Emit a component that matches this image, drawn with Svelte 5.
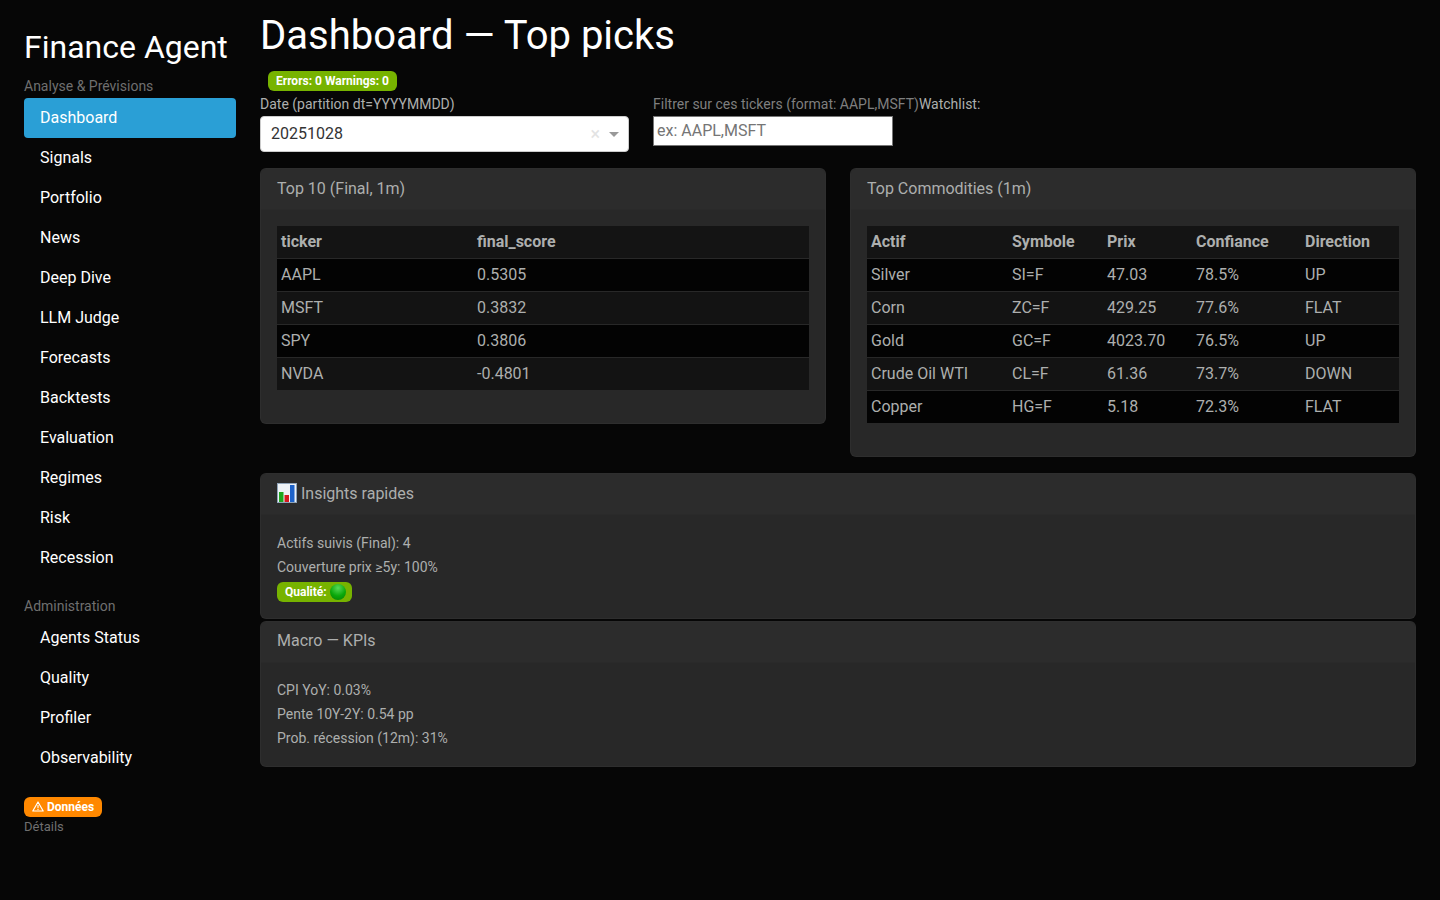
<script>
    const analyse = ['Dashboard', 'Signals', 'Portfolio', 'News', 'Deep Dive', 'LLM Judge', 'Forecasts', 'Backtests', 'Evaluation', 'Regimes', 'Risk', 'Recession'];
    const admin = ['Agents Status', 'Quality', 'Profiler', 'Observability'];

    const top10 = [
        ['AAPL', '0.5305'],
        ['MSFT', '0.3832'],
        ['SPY', '0.3806'],
        ['NVDA', '-0.4801']
    ];
    const commodities = [
        ['Silver', 'SI=F', '47.03', '78.5%', 'UP'],
        ['Corn', 'ZC=F', '429.25', '77.6%', 'FLAT'],
        ['Gold', 'GC=F', '4023.70', '76.5%', 'UP'],
        ['Crude Oil WTI', 'CL=F', '61.36', '73.7%', 'DOWN'],
        ['Copper', 'HG=F', '5.18', '72.3%', 'FLAT']
    ];
</script>

<div class="layout">
    <aside class="sidebar">
        <h2 class="brand">Finance Agent</h2>
        <div class="section">Analyse &amp; Prévisions</div>
        <nav>
            {#each analyse as item, i}
                <a href="#top" class:active={i === 0}>{item}</a>
            {/each}
        </nav>
        <div class="section admin">Administration</div>
        <nav>
            {#each admin as item}
                <a href="#top">{item}</a>
            {/each}
        </nav>
        <div class="status">
            <span class="badge warning">
                <svg width="12" height="11" viewBox="0 0 12 11" aria-hidden="true">
                    <path d="M6 1 L11.2 10 H0.8 Z" fill="none" stroke="#fff" stroke-width="1.2" stroke-linejoin="round" />
                    <path d="M6 4 V7.2 M6 8 V9" stroke="#fff" stroke-width="1.1" />
                </svg>
                Données
            </span>
            <div class="details">Détails</div>
        </div>
    </aside>

    <main>
        <h1>Dashboard — Top picks</h1>
        <div class="badge-row"><span class="badge success">Errors: 0 Warnings: 0</span></div>
        <div class="filters">
            <div class="date-field">
                <label for="date">Date (partition dt=YYYYMMDD)</label>
                <div class="select" id="date">
                    <span>20251028</span>
                    <span class="clear">×</span>
                    <span class="caret"></span>
                </div>
            </div>
            <div class="ticker-field">
                <div class="ticker-label"><span class="muted">Filtrer sur ces tickers (format: AAPL,MSFT)</span>Watchlist:</div>
                <input type="text" placeholder="ex: AAPL,MSFT" />
            </div>
        </div>

        <div class="columns">
            <section class="card">
                <header>Top 10 (Final, 1m)</header>
                <div class="card-body">
                    <table>
                        <thead>
                            <tr><th class="c-ticker">ticker</th><th>final_score</th></tr>
                        </thead>
                        <tbody>
                            {#each top10 as row}
                                <tr>
                                    {#each row as cell}<td>{cell}</td>{/each}
                                </tr>
                            {/each}
                        </tbody>
                    </table>
                </div>
            </section>
            <section class="card">
                <header>Top Commodities (1m)</header>
                <div class="card-body">
                    <table>
                        <thead>
                            <tr>
                                <th class="c-actif">Actif</th>
                                <th class="c-sym">Symbole</th>
                                <th class="c-prix">Prix</th>
                                <th class="c-conf">Confiance</th>
                                <th>Direction</th>
                            </tr>
                        </thead>
                        <tbody>
                            {#each commodities as row}
                                <tr>
                                    {#each row as cell}<td>{cell}</td>{/each}
                                </tr>
                            {/each}
                        </tbody>
                    </table>
                </div>
            </section>
        </div>

        <section class="card insights">
            <header>
                <svg class="chart" width="20" height="20" viewBox="0 0 20 20" aria-hidden="true">
                    <rect x="0.5" y="0.5" width="19" height="19" fill="#eef2f6" stroke="#8fa3b8" />
                    <rect x="2" y="9" width="4.5" height="10" fill="#1ea51e" />
                    <rect x="7.5" y="12" width="4.5" height="7" fill="#d3191f" />
                    <rect x="13" y="2" width="4.5" height="17" fill="#1d62c9" />
                </svg>
                Insights rapides
            </header>
            <div class="card-body text">
                <p>Actifs suivis (Final): 4</p>
                <p>Couverture prix ≥5y: 100%</p>
                <span class="badge success quality">Qualité: <i class="dot"></i></span>
            </div>
        </section>

        <section class="card macro">
            <header>Macro — KPIs</header>
            <div class="card-body text">
                <p>CPI YoY: 0.03%</p>
                <p>Pente 10Y-2Y: 0.54 pp</p>
                <p>Prob. récession (12m): 31%</p>
            </div>
        </section>
    </main>
</div>

<style>
    :global(body) {
        background: #060606;
        color: #adafae;
        font-family: Roboto, "Liberation Sans", sans-serif;
        font-size: 16px;
    }

    .layout {
        display: flex;
        min-height: 900px;
        overflow: hidden;
    }

    .sidebar {
        width: 212px;
        flex-shrink: 0;
        padding: 28px 24px 0;
    }

    .brand {
        margin: 0 0 10px;
        color: #fff;
        font-size: 32px;
        font-weight: 400;
        line-height: 38px;
    }

    .section {
        color: #6f6f6f;
        font-size: 14px;
        line-height: 21px;
        height: 22px;
    }

    .section.admin {
        margin-top: 18px;
    }

    nav {
        display: flex;
        flex-direction: column;
    }

    nav a {
        display: block;
        height: 40px;
        padding: 0 16px;
        line-height: 39px;
        color: #fff;
        text-decoration: none;
        border-radius: 4px;
    }

    nav a.active {
        background: #2a9fd6;
    }

    .status {
        margin-top: 18px;
    }

    .details {
        color: #6f6f6f;
        font-size: 13px;
        line-height: 20px;
    }

    .badge {
        display: inline-block;
        color: #fff;
        font-size: 12px;
        font-weight: 700;
        line-height: 12px;
        padding: 4px 8px;
        border-radius: 6px;
    }

    .badge.warning {
        background: #ff8800;
    }

    .badge.warning svg {
        vertical-align: -1px;
    }

    .badge.success {
        background: #77b300;
    }

    main {
        flex: 1;
        padding: 12px 24px 0 0;
        min-width: 0;
    }

    h1 {
        margin: 0;
        color: #fff;
        font-size: 40px;
        font-weight: 400;
        line-height: 48px;
    }

    .badge-row {
        margin-top: 10px;
        padding-left: 8px;
        height: 20px;
        line-height: 20px;
    }

    .filters {
        display: flex;
        gap: 24px;
        margin-top: 3px;
    }

    .date-field {
        width: 369px;
    }

    label, .ticker-label {
        display: block;
        font-size: 14px;
        line-height: 22px;
        height: 23px;
    }

    .muted {
        color: #7f7f7f;
    }

    .select {
        display: flex;
        align-items: center;
        box-sizing: border-box;
        height: 36px;
        padding: 0 9px 2px 10px;
        background: #fff;
        border: 1px solid #ccc;
        border-radius: 4px;
        color: #333;
    }

    .select span:first-child {
        flex: 1;
    }

    .clear {
        color: #e3e3e3;
        font-size: 18px;
        margin-right: 9px;
    }

    .caret {
        width: 0;
        height: 0;
        margin-top: 2px;
        border: 5px solid transparent;
        border-top-color: #999;
        border-bottom: 0;
    }

    input {
        display: block;
        box-sizing: border-box;
        width: 240px;
        height: 30px;
        padding: 0 3px 2px;
        background: #fff;
        border: 1px solid #767676;
        font: inherit;
    }

    input::placeholder {
        color: #757575;
    }

    .columns {
        display: grid;
        grid-template-columns: 1fr 1fr;
        gap: 24px;
        align-items: start;
        margin-top: 16px;
    }

    .card {
        background: #282828;
        border: 1px solid rgba(255, 255, 255, 0.03);
        border-radius: 6px;
        overflow: hidden;
    }

    .card header {
        height: 40px;
        padding: 0 16px;
        line-height: 39px;
        background: #2c2c2c;
        border-bottom: 1px solid #2a2a2a;
    }

    .card-body {
        padding: 16px 16px 32px;
    }

    table {
        width: 100%;
        border-collapse: collapse;
        table-layout: fixed;
    }

    th, td {
        height: 30px;
        padding: 0 4px 2px;
        text-align: left;
        border-bottom: 1px solid #282828;
    }

    th {
        background: #141414;
        font-weight: 700;
    }

    tbody tr:nth-child(odd) td {
        background: #030303;
    }

    tbody tr:nth-child(even) td {
        background: #131313;
    }

    .c-ticker { width: 188px; }
    .c-actif { width: 133px; }
    .c-sym { width: 87px; }
    .c-prix { width: 81px; }
    .c-conf { width: 101px; }

    .insights {
        margin-top: 16px;
    }

    .macro {
        margin-top: 2px;
    }

    .macro header {
        line-height: 37px;
    }

    .text {
        padding-top: 18px;
        padding-bottom: 16px;
        font-size: 14px;
    }

    .macro .text {
        padding-top: 17px;
        padding-bottom: 14px;
    }

    .text p {
        margin: 0 0 3px;
        line-height: 21px;
    }

    .quality {
        display: inline-flex;
        align-items: center;
        gap: 3px;
        margin-top: 1px;
        padding: 2px 6px 2px 8px;
        height: 16px;
    }

    .dot {
        display: block;
        width: 16px;
        height: 16px;
        border-radius: 50%;
        background: radial-gradient(circle at 50% 25%, #57d957, #0aa80a 55%, #067d06);
    }

    .chart {
        vertical-align: -4px;
    }
</style>
